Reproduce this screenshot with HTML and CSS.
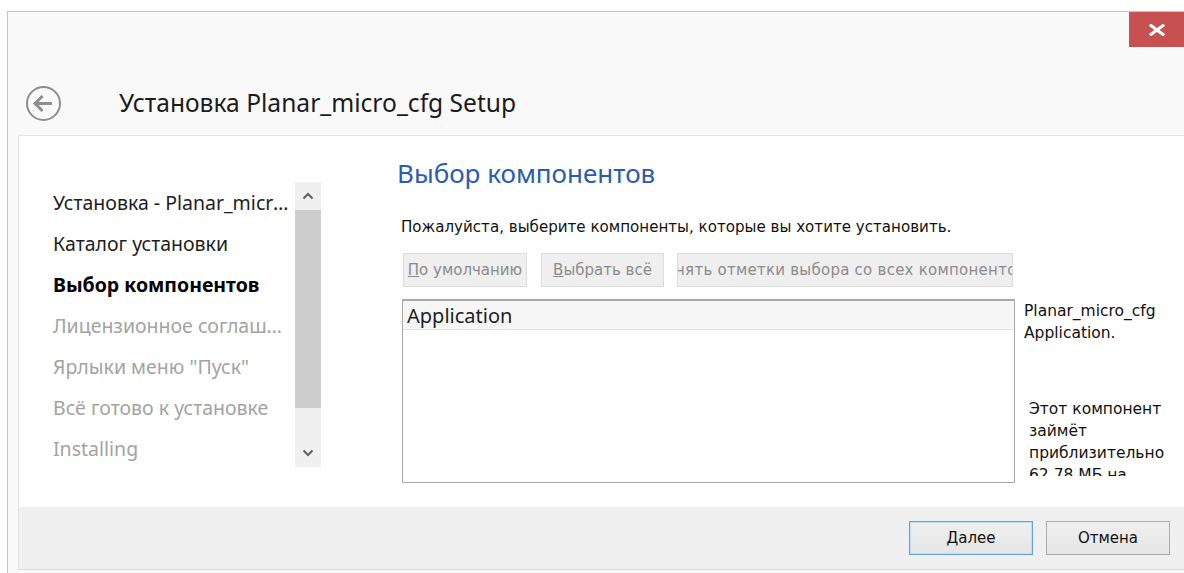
FILE: index.html
```html
<!DOCTYPE html>
<html lang="ru">
<head>
<meta charset="utf-8">
<title>Установка Planar_micro_cfg Setup</title>
<link rel="stylesheet" href="styles.css">
</head>
<body>
<div class="window">
  <div class="caption">
    <button class="close" type="button" aria-label="Закрыть">
      <svg width="16" height="12" viewBox="0 0 16 12"><path d="M2 1.5 L14 10.5 M14 1.5 L2 10.5" stroke="#fff" stroke-width="3" stroke-linecap="square" fill="none"/></svg>
    </button>
  </div>
  <div class="header">
    <svg class="back" width="37" height="37" viewBox="0 0 37 37">
      <circle cx="18.5" cy="18.5" r="16.5" fill="none" stroke="#8e8e8e" stroke-width="2"/>
      <path d="M10 18.5 H27 M17.5 11 L10 18.5 L17.5 26" fill="none" stroke="#8e8e8e" stroke-width="3"/>
    </svg>
    <h1 class="title">Установка Planar_micro_cfg Setup</h1>
  </div>
  <div class="body">
    <div class="panel">
      <nav class="steps">
        <ul class="step-list">
          <li class="step done">Установка - Planar_micro_cfg Setup</li>
          <li class="step done">Каталог установки</li>
          <li class="step current">Выбор компонентов</li>
          <li class="step">Лицензионное соглашение</li>
          <li class="step">Ярлыки меню "Пуск"</li>
          <li class="step">Всё готово к установке</li>
          <li class="step">Installing</li>
        </ul>
        <div class="scrollbar">
          <div class="sb-arrow">
            <svg width="12" height="8" viewBox="0 0 12 8"><path d="M1.5 6.5 L6 2 L10.5 6.5" fill="none" stroke="#5f5f5f" stroke-width="2"/></svg>
          </div>
          <div class="sb-thumb"></div>
          <div class="sb-track"></div>
          <div class="sb-arrow">
            <svg width="12" height="8" viewBox="0 0 12 8"><path d="M1.5 1.5 L6 6 L10.5 1.5" fill="none" stroke="#5f5f5f" stroke-width="2"/></svg>
          </div>
        </div>
      </nav>
      <main class="page">
        <h2 class="page-title">Выбор компонентов</h2>
        <p class="lead">Пожалуйста, выберите компоненты, которые вы хотите установить.</p>
        <div class="tools">
          <button class="tool w1" type="button" disabled><span><u>П</u>о умолчанию</span></button>
          <button class="tool w2" type="button" disabled><span><u>В</u>ыбрать всё</span></button>
          <button class="tool w3" type="button" disabled><span>Снять отметки выбора со всех компонентов</span></button>
        </div>
        <div class="picker">
          <div class="components">
            <div class="component">Application</div>
          </div>
          <div class="info">
            <p class="info-name">Planar_micro_cfg Application.</p>
            <p class="info-size">Этот компонент займёт приблизительно 62,78 МБ на диске.</p>
          </div>
        </div>
      </main>
    </div>
    <div class="footer">
      <button class="btn primary" type="button"><u>Д</u>алее</button>
      <button class="btn" type="button">Отмена</button>
    </div>
  </div>
</div>
</body>
</html>
```

FILE: styles.css
```css
html, body {
  margin: 0;
  height: 100%;
  background: #ffffff;
  overflow: hidden;
}

body {
  font-family: "Noto Sans", "Open Sans", sans-serif;
  color: #1e1e1e;
}

/* outer window frame */
.window {
  margin: 11px 0 0 7px;
  height: 562px;
  border-top: 1px solid #c6c6c6;
  border-left: 1px solid #c6c6c6;
  background: #f9f9f9;
  display: flex;
  flex-direction: column;
  box-sizing: border-box;
}

.caption {
  height: 35px;
  display: flex;
  justify-content: flex-end;
}

.close {
  width: 55px;
  height: 35px;
  border: 0;
  padding: 0;
  background: #c75050;
  display: flex;
  align-items: center;
  justify-content: center;
}

.header {
  height: 88px;
  display: flex;
  align-items: flex-start;
  padding-left: 17px;
}

.back {
  margin-top: 38px;
  flex: none;
}

.title {
  margin: 41px 0 0 57px;
  font-size: 24.6px;
  line-height: 30px;
  font-weight: 400;
  color: #1b1b1b;
  white-space: nowrap;
}

.body {
  flex: 1;
  display: flex;
  flex-direction: column;
  padding-left: 10px;
}

/* white content area */
.panel {
  height: 372px;
  box-sizing: border-box;
  border-top: 1px solid #e2e2e2;
  border-left: 1px solid #e2e2e2;
  background: #ffffff;
  display: flex;
}

.steps {
  display: flex;
  padding: 46px 0 0 34px;
  flex: none;
}

.step-list {
  list-style: none;
  margin: 0;
  padding: 0;
  width: 240px;
}

.step {
  height: 41px;
  line-height: 41px;
  font-size: 19.5px;
  color: #a3a3a3;
  white-space: nowrap;
  overflow: hidden;
  text-overflow: ellipsis;
  padding-right: 4px;
}

.step.done {
  color: #1e1e1e;
}

.step.current {
  color: #000000;
  font-weight: 700;
}

.scrollbar {
  width: 26px;
  height: 285px;
  margin-left: 2px;
  background: #f0f0f0;
  display: flex;
  flex-direction: column;
}

.sb-arrow {
  height: 28px;
  display: flex;
  align-items: center;
  justify-content: center;
  flex: none;
}

.sb-thumb {
  height: 198px;
  background: #cdcdcd;
  flex: none;
}

.sb-track {
  flex: 1;
}

.page {
  margin-left: 76px;
  padding-top: 21px;
  flex: 1;
  min-width: 0;
}

.page-title {
  margin: 0;
  font-size: 26px;
  line-height: 32px;
  font-weight: 400;
  color: #2a5cb0;
  white-space: nowrap;
}

.lead {
  margin: 29px 0 0 4px;
  font-family: "DejaVu Sans", sans-serif;
  font-size: 15.1px;
  line-height: 18px;
  color: #111111;
  white-space: nowrap;
}

.tools {
  display: flex;
  margin: 17px 0 0 6px;
}

.tool {
  height: 34px;
  box-sizing: border-box;
  border: 1px solid #dcdcdc;
  background: #efefef;
  padding: 0;
  overflow: hidden;
  display: flex;
  align-items: center;
  justify-content: center;
  font-family: "DejaVu Sans", sans-serif;
  font-size: 15px;
  color: #8b8b8b;
  white-space: nowrap;
}

.tool span {
  flex: none;
}

.w1 { width: 124px; }
.w2 { width: 123px; margin-left: 14px; }
.w3 { width: 336px; margin-left: 13px; letter-spacing: 0.25px; }

.picker {
  display: flex;
  margin: 12px 0 0 5px;
}

.components {
  width: 613px;
  height: 184px;
  box-sizing: border-box;
  border: 1px solid #a9a9a9;
  border-top: 2px solid #a9a9a9;
  background: #ffffff;
  flex: none;
}

.component {
  height: 29px;
  line-height: 28px;
  box-sizing: border-box;
  padding: 1px 0 0 4px;
  background: #f6f6f6;
  border-bottom: 1px solid #e2e2e2;
  font-size: 20px;
  color: #1e1e1e;
}

.info {
  margin-left: 9px;
  width: 156px;
  height: 177px;
  overflow: hidden;
  font-family: "DejaVu Sans", sans-serif;
  font-size: 15.5px;
  line-height: 22px;
  color: #111111;
}

.info p {
  margin: 0;
}

.info-name {
  padding-top: 1px;
}

.info-size {
  margin-top: 54px !important;
  padding-left: 5px;
}

/* bottom button bar */
.footer {
  height: 63px;
  box-sizing: border-box;
  background: #f0f0f0;
  border-left: 1px solid #e2e2e2;
  border-bottom: 1px solid #d9d9d9;
  display: flex;
  align-items: center;
  justify-content: flex-end;
  gap: 13px;
  padding-right: 14px;
}

.btn {
  width: 124px;
  height: 34px;
  box-sizing: border-box;
  border: 1px solid #acacac;
  background: linear-gradient(#f0f0f0, #e5e5e5);
  font-family: "DejaVu Sans", sans-serif;
  font-size: 15px;
  color: #111111;
  padding: 0;
}

.btn.primary {
  border: 1px solid #5fa3e6;
  box-shadow: inset 0 0 0 1px #bcdcf7;
}
```
